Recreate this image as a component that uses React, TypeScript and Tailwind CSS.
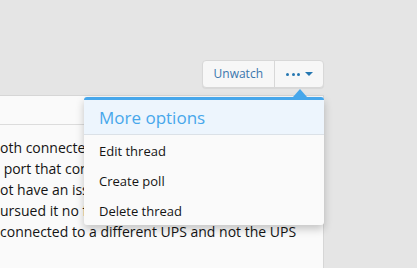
const lines = [
  "oth connected to the same UPS, and each has",
  " port that controls the shutdown over USB",
  "ot have an issue with it so far, but I have",
  "ursued it no further than the basic setup",
  "connected to a different UPS and not the UPS",
]

const menuItems = ["Edit thread", "Create poll", "Delete thread"]

export default function App() {
  return (
    <div
      className="relative h-[268px] w-[417px] overflow-hidden bg-[#e5e5e5]"
      style={{ fontFamily: "'Open Sans', 'Noto Sans', sans-serif" }}
    >
      <div className="w-[324px]">
        <div className="flex justify-end pt-[60px]">
          <div className="flex h-[28px] rounded-[4px] border border-[#d8d8d8] bg-[#f7f7f7] shadow-[0_1px_1px_rgba(0,0,0,0.06)]">
            <button className="px-[11px] text-[12px] text-[#3a76ad]">Unwatch</button>
            <button className="flex items-center gap-[5px] border-l border-[#d8d8d8] pl-[11px] pr-[10px]">
              <span className="flex gap-[2.5px]">
                <span className="h-[3px] w-[3px] rounded-full bg-[#2577b1]" />
                <span className="h-[3px] w-[3px] rounded-full bg-[#2577b1]" />
                <span className="h-[3px] w-[3px] rounded-full bg-[#2577b1]" />
              </span>
              <span className="h-0 w-0 border-x-[4px] border-t-[4px] border-x-transparent border-t-[#2577b1]" />
            </button>
          </div>
        </div>

        <div className="mt-[7px] h-[200px] border-r border-t border-[#d6d6d6] bg-[#fafafa]">
          <div className="h-[29px] border-b border-[#dcdcdc]" />
          <div className="pt-[12px] text-[14px] leading-[21px] text-[#141414]">
            {lines.map((l, i) => (
              <div key={i} className="overflow-hidden whitespace-pre">
                {l}
              </div>
            ))}
          </div>
        </div>
      </div>

      {/* menu */}
      <div className="absolute left-[84px] top-[97px] w-[240px] rounded-[3px] bg-[#fafafa] shadow-[0_4px_8px_rgba(0,0,0,0.22)]">
        <span className="absolute -top-[8px] left-[209px] h-0 w-0 border-x-[7px] border-b-[8px] border-x-transparent border-b-[#47a7eb]" />
        <div className="h-[3px] rounded-t-[3px] bg-[#47a7eb]" />
        <div className="flex h-[35px] items-center border-b border-[#dbe1e7] bg-[#edf5fd] px-[15px] pt-[1px] text-[17px] text-[#47a7eb]">
          More options
        </div>
        {menuItems.map((m) => (
          <div key={m} className="flex h-[30px] items-center px-[15px] pt-[4px] text-[13px] text-[#141414]">
            {m}
          </div>
        ))}
      </div>
    </div>
  )
}
